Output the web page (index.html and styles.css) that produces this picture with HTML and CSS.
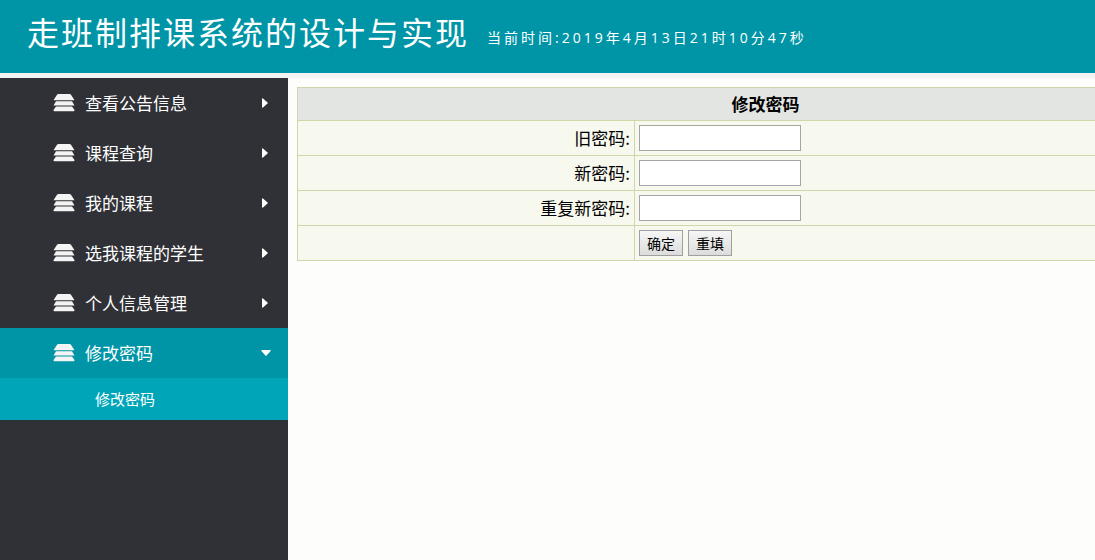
FILE: index.html
```html
<!DOCTYPE html>
<html lang="zh-CN">
<head>
<meta charset="utf-8">
<title>走班制排课系统的设计与实现</title>
<link rel="stylesheet" href="styles.css">
</head>
<body>
<svg class="symbols" aria-hidden="true">
  <symbol id="stack" viewBox="0 0 22 18">
    <path d="M5.500 0h11q1 0 1.500 .8l3.500 5.400h-21l3.500-5.400q.5-.8 1.500-.8z"/>
    <path d="M3 7.200h16l2.500 4.300h-21z"/>
    <path d="M3 12.500h16l2.500 3.500q.3 1.200-1 1.200h-19q-1.300 0-1-1.200z"/>
  </symbol>
  <symbol id="caret" viewBox="0 0 6 10">
    <path d="M0 1q0-1 1-.6l4.500 4q.7.6 0 1.200l-4.500 4q-1 .4-1-.6z"/>
  </symbol>
  <symbol id="caret-down" viewBox="0 0 10 6">
    <path d="M1 0q-1 0-.6 1l4 4.500q.6.7 1.200 0l4-4.500q.4-1-.6-1z"/>
  </symbol>
</svg>
<header class="header">
  <h1 class="title">走班制排课系统的设计与实现</h1>
  <span class="clock">当前时间:2019年4月13日21时10分47秒</span>
</header>
<div class="layout">
  <nav class="sidebar">
    <a class="item" href="#"><svg class="icon"><use href="#stack"/></svg><span class="label">查看公告信息</span><svg class="caret"><use href="#caret"/></svg></a>
    <a class="item" href="#"><svg class="icon"><use href="#stack"/></svg><span class="label">课程查询</span><svg class="caret"><use href="#caret"/></svg></a>
    <a class="item" href="#"><svg class="icon"><use href="#stack"/></svg><span class="label">我的课程</span><svg class="caret"><use href="#caret"/></svg></a>
    <a class="item" href="#"><svg class="icon"><use href="#stack"/></svg><span class="label">选我课程的学生</span><svg class="caret"><use href="#caret"/></svg></a>
    <a class="item" href="#"><svg class="icon"><use href="#stack"/></svg><span class="label">个人信息管理</span><svg class="caret"><use href="#caret"/></svg></a>
    <a class="item active" href="#"><svg class="icon"><use href="#stack"/></svg><span class="label">修改密码</span><svg class="caret caret-open"><use href="#caret-down"/></svg></a>
    <a class="subitem" href="#">修改密码</a>
  </nav>
  <main class="content">
    <form>
      <table class="form-table">
        <colgroup><col class="name-column"><col></colgroup>
        <thead>
          <tr><th colspan="2">修改密码</th></tr>
        </thead>
        <tbody>
          <tr><td class="name"><label for="old">旧密码:</label></td><td><input class="field" id="old" type="password"></td></tr>
          <tr><td class="name"><label for="new">新密码:</label></td><td><input class="field" id="new" type="password"></td></tr>
          <tr><td class="name"><label for="repeat">重复新密码:</label></td><td><input class="field" id="repeat" type="password"></td></tr>
          <tr><td class="name"></td><td><div class="actions"><button class="button" type="submit">确定</button><button class="button" type="reset">重填</button></div></td></tr>
        </tbody>
      </table>
    </form>
  </main>
</div>
</body>
</html>
```
FILE: styles.css
```css
* {
  box-sizing: border-box;
}

body {
  margin: 0;
  min-height: 100vh;
  display: flex;
  flex-direction: column;
  background: #fdfefc;
  color: #000;
  font-family: "Noto Sans CJK SC", sans-serif;
  font-size: 17px;
  line-height: 24px;
}

.symbols {
  display: none;
}

.header {
  display: flex;
  align-items: center;
  gap: 18px;
  padding: 7px 27px 18px;
  background: #0095a6;
  border-bottom: 5px solid #f4f4f4;
  color: #fff;
  white-space: nowrap;
}

.title {
  margin: 0;
  font-size: 32px;
  font-weight: 400;
  line-height: 48px;
  letter-spacing: 2px;
}

.clock {
  padding-top: 14px;
  font-family: "Open Sans", "Noto Sans CJK SC", sans-serif;
  font-size: 14px;
  letter-spacing: 3px;
}

.layout {
  flex: 1;
  display: flex;
}

.sidebar {
  flex: none;
  width: 288px;
  background: #303136;
}

.item {
  display: flex;
  align-items: center;
  height: 50px;
  padding: 0 20px 0 53px;
  color: #fff;
  text-decoration: none;
}

.active {
  background: #0095a6;
}

.label {
  flex: 1;
  padding-left: 10px;
}

.icon {
  width: 22px;
  height: 18px;
  fill: #f4f4f4;
}

.caret {
  width: 6px;
  height: 10px;
  fill: #fff;
}

.caret-open {
  width: 10px;
  height: 6px;
  margin-right: -3px;
}

.subitem {
  display: block;
  padding: 9px 0 9px 95px;
  background: #00a5b8;
  color: #fff;
  font-size: 15px;
  text-decoration: none;
}

.content {
  flex: 1;
  min-width: 0;
  overflow: hidden;
  padding: 9px 0 0 9px;
}

.form-table {
  width: calc(100% + 139px);
  border-collapse: collapse;
  table-layout: fixed;
}

.name-column {
  width: 36%;
}

.form-table th,
.form-table td {
  border: 1px solid #d0d6a8;
  padding: 4px;
}

.form-table th {
  background: #e3e5e3;
  font-weight: 700;
}

.form-table td {
  background: #f7f8ee;
}

.form-table .name {
  padding-top: 3px;
  text-align: right;
}

.field {
  display: block;
  width: 162px;
  height: 26px;
  padding: 2px;
  border: 1px solid #a5a5a5;
  background: #fff;
  font: inherit;
}

.actions {
  display: flex;
  gap: 5px;
}

.button {
  height: 26px;
  padding: 0 7px;
  border: 1px solid #a0a0a0;
  background: linear-gradient(#f6f6f6, #dcdcdc);
  color: #000;
  font-family: inherit;
  font-size: 14px;
  line-height: 20px;
}
```
